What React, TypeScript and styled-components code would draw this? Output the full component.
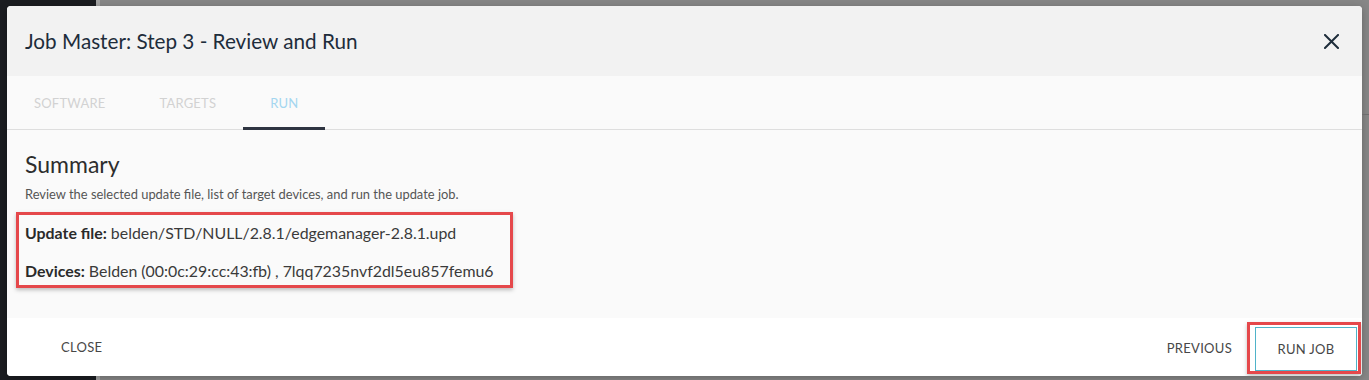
import React from "react";
import styled, { createGlobalStyle } from "styled-components";

const Global = createGlobalStyle`
  html, body { margin: 0; padding: 0; }
  body {
    width: 1369px;
    height: 380px;
    overflow: hidden;
    font-family: "Lato", "Open Sans", sans-serif;
  }
`;

const Backdrop = styled.div`
  box-sizing: border-box;
  width: 1369px;
  height: 380px;
  padding: 6px 7px 4px 7px;
  background: linear-gradient(
    to right,
    #1b1d21 0,
    #1b1d21 96px,
    #a3a3a3 96px,
    #a3a3a3 100px,
    #878787 100px
  );
  position: relative;
`;

const EdgeLine = styled.div`
  position: absolute;
  right: 0;
  top: 114px;
  width: 7px;
  height: 1px;
  background: #6d6d6d;
`;

const Dialog = styled.div`
  width: 1355px;
  height: 370px;
  border-radius: 4px;
  overflow: hidden;
  display: flex;
  flex-direction: column;
  background: #fafafa;
  box-shadow: 0 2px 8px rgba(0, 0, 0, 0.25);
`;

const Header = styled.div`
  height: 70px;
  flex: none;
  display: flex;
  align-items: center;
  justify-content: space-between;
  padding: 0 23px 0 18px;
  background: #f2f2f2;
`;

const Title = styled.h2`
  margin: 0;
  font-size: 20.7px;
  font-weight: 400;
  color: #1e2d3b;
`;

const CloseIcon = styled.button`
  border: none;
  background: none;
  padding: 0;
  width: 15px;
  height: 15px;
  display: flex;
  cursor: pointer;
`;

const Tabs = styled.div`
  height: 53px;
  flex: none;
  display: flex;
  border-bottom: 1px solid #dedede;
  background: #fafafa;
`;

const Tab = styled.div<{ $active?: boolean }>`
  position: relative;
  display: flex;
  align-items: center;
  padding: 0 27px;
  font-size: 13px;
  letter-spacing: 0.2px;
  text-transform: uppercase;
  color: ${(p) => (p.$active ? "#a3d6f0" : "#d2d2d2")};
  &::after {
    content: "";
    position: absolute;
    left: 0;
    right: 0;
    bottom: -1px;
    height: 3px;
    background: ${(p) => (p.$active ? "#2e3441" : "transparent")};
  }
`;

const Content = styled.div`
  flex: 1;
  padding: 20px 18px 0 18px;
  display: flex;
  flex-direction: column;
  align-items: flex-start;
`;

const Heading = styled.h3`
  margin: 0;
  font-size: 23px;
  line-height: 28px;
  font-weight: 400;
  color: #2d2d2d;
`;

const Description = styled.p`
  margin: 8px 0 0 0;
  font-size: 12.9px;
  line-height: 16px;
  color: #555;
`;

const Highlight = styled.div`
  margin: 10px 0 0 -9px;
  padding: 7px 16px 3px 6px;
  border: 3px solid #e5484b;
  box-shadow: 0 2px 4px rgba(0, 0, 0, 0.25);
  display: flex;
  flex-direction: column;
  gap: 16px;
`;

const InfoLine = styled.div`
  font-size: 15.9px;
  line-height: 22px;
  color: #3a3a3a;
  b {
    font-weight: 700;
    color: #2a2a2a;
  }
`;

const Footer = styled.div`
  height: 58px;
  flex: none;
  background: #ffffff;
  display: flex;
  align-items: center;
  justify-content: space-between;
  padding: 0 1px 0 37px;
`;

const Actions = styled.div`
  display: flex;
  align-items: center;
  padding-top: 2px;
`;

const TextButton = styled.button`
  border: 1px solid transparent;
  background: none;
  font-family: inherit;
  font-size: 13px;
  letter-spacing: 0.3px;
  text-transform: uppercase;
  color: #474747;
  padding: 0 16px;
  height: 44px;
  cursor: pointer;
`;

const PrevButton = styled(TextButton)`
  padding: 0 14px 0 18px;
`;

const RunBox = styled.div`
  border: 3px solid #e5484b;
  padding: 2px 1px 0 5px;
  box-shadow: 0 2px 4px rgba(0, 0, 0, 0.25);
  display: flex;
`;

const OutlinedButton = styled(TextButton)`
  border: 1px solid #4fb3c9;
  width: 102px;
  padding: 0;
  background: #fff;
`;

export default function App() {
  return (
    <>
      <Global />
      <Backdrop>
        <EdgeLine />
        <Dialog>
          <Header>
            <Title>Job Master: Step 3 - Review and Run</Title>
            <CloseIcon aria-label="close">
              <svg width="15" height="15" viewBox="0 0 15 15">
                <path d="M1 1 L14 14 M14 1 L1 14" stroke="#1e2d3b" strokeWidth="2" strokeLinecap="square" />
              </svg>
            </CloseIcon>
          </Header>
          <Tabs>
            <Tab>Software</Tab>
            <Tab>Targets</Tab>
            <Tab $active>Run</Tab>
          </Tabs>
          <Content>
            <Heading>Summary</Heading>
            <Description>
              Review the selected update file, list of target devices, and run the update job.
            </Description>
            <Highlight>
              <InfoLine>
                <b>Update file:</b> belden/STD/NULL/2.8.1/edgemanager-2.8.1.upd
              </InfoLine>
              <InfoLine>
                <b>Devices:</b> Belden (00:0c:29:cc:43:fb) , 7lqq7235nvf2dl5eu857femu6
              </InfoLine>
            </Highlight>
          </Content>
          <Footer>
            <TextButton>Close</TextButton>
            <Actions>
              <PrevButton>Previous</PrevButton>
              <RunBox>
                <OutlinedButton>Run Job</OutlinedButton>
              </RunBox>
            </Actions>
          </Footer>
        </Dialog>
      </Backdrop>
    </>
  );
}
